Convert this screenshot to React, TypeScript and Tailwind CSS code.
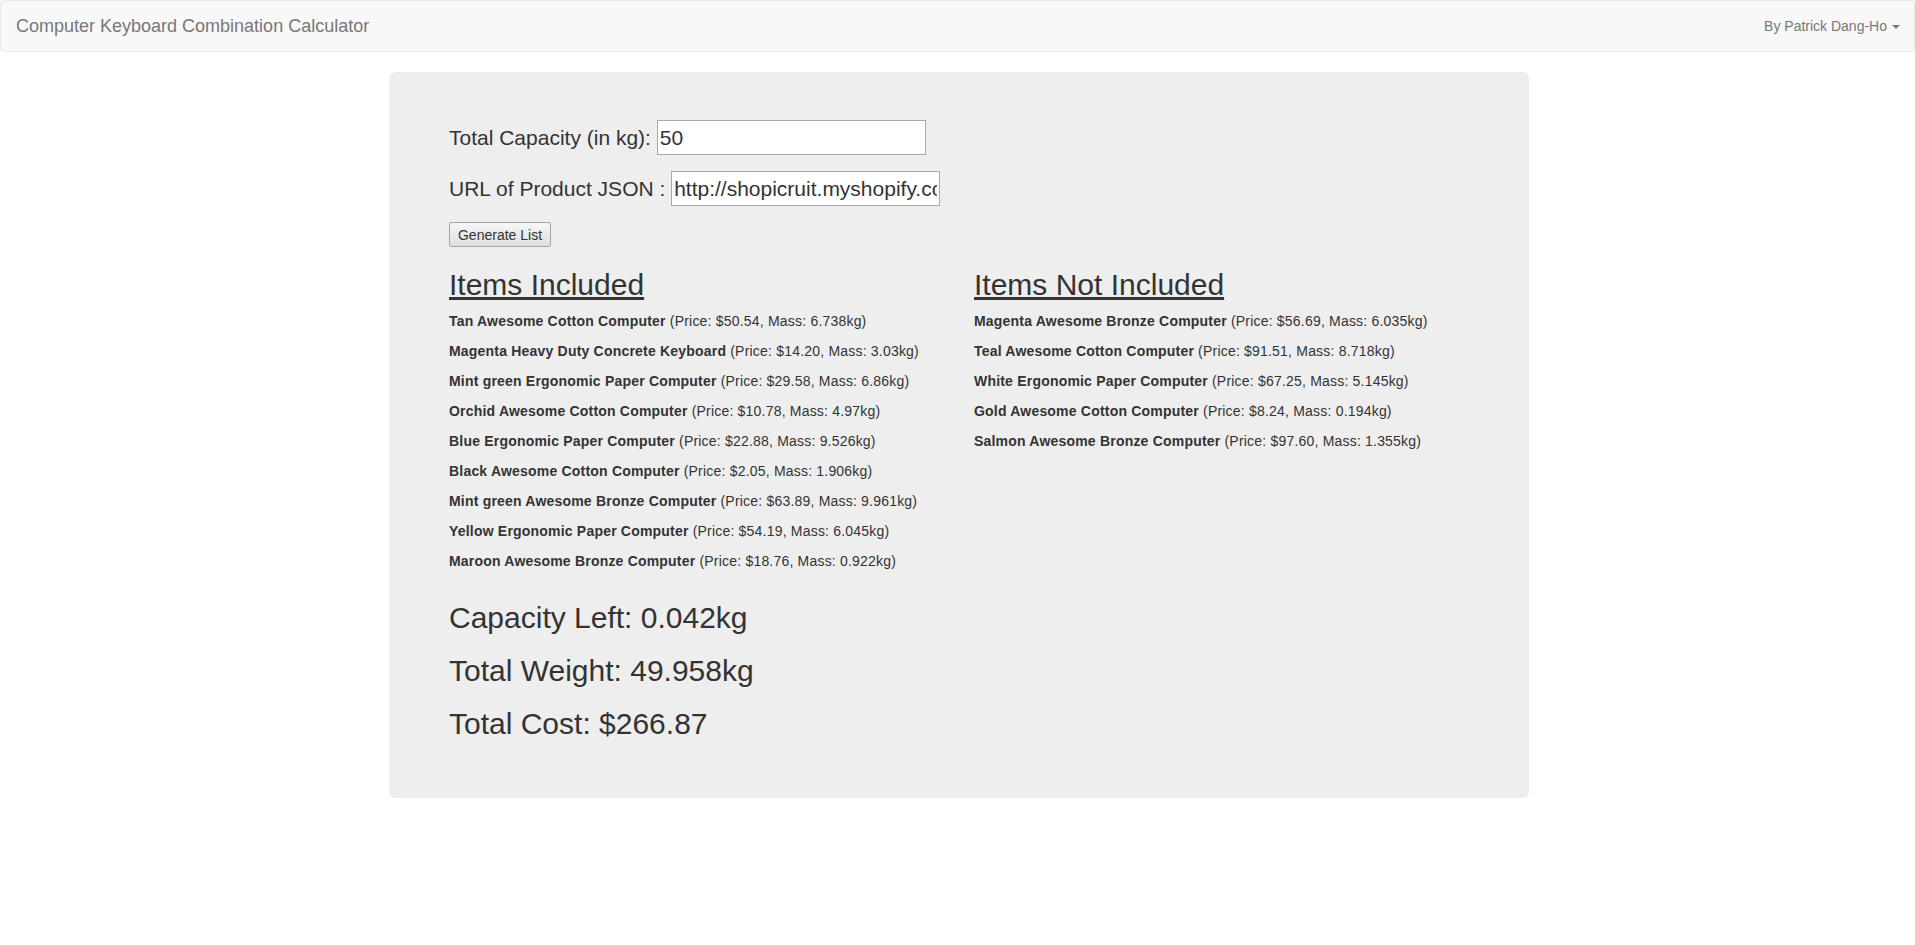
const included = [
  { name: "Tan Awesome Cotton Computer", price: "50.54", mass: "6.738" },
  { name: "Magenta Heavy Duty Concrete Keyboard", price: "14.20", mass: "3.03" },
  { name: "Mint green Ergonomic Paper Computer", price: "29.58", mass: "6.86" },
  { name: "Orchid Awesome Cotton Computer", price: "10.78", mass: "4.97" },
  { name: "Blue Ergonomic Paper Computer", price: "22.88", mass: "9.526" },
  { name: "Black Awesome Cotton Computer", price: "2.05", mass: "1.906" },
  { name: "Mint green Awesome Bronze Computer", price: "63.89", mass: "9.961" },
  { name: "Yellow Ergonomic Paper Computer", price: "54.19", mass: "6.045" },
  { name: "Maroon Awesome Bronze Computer", price: "18.76", mass: "0.922" },
];

const notIncluded = [
  { name: "Magenta Awesome Bronze Computer", price: "56.69", mass: "6.035" },
  { name: "Teal Awesome Cotton Computer", price: "91.51", mass: "8.718" },
  { name: "White Ergonomic Paper Computer", price: "67.25", mass: "5.145" },
  { name: "Gold Awesome Cotton Computer", price: "8.24", mass: "0.194" },
  { name: "Salmon Awesome Bronze Computer", price: "97.60", mass: "1.355" },
];

type Item = { name: string; price: string; mass: string };

function ItemList({ title, items }: { title: string; items: Item[] }) {
  return (
    <div>
      <h2 className="mb-[10px] text-[30px] leading-[33px] underline">{title}</h2>
      {items.map((item, idx) => (
        <p key={idx} className="mb-[10px] text-[14px] leading-[20px] tracking-[0.2px]">
          <b>{item.name}</b> (Price: ${item.price}, Mass: {item.mass}kg)
        </p>
      ))}
    </div>
  );
}

export default function App() {
  return (
    <div className="min-h-screen bg-white font-['Liberation_Sans',Arial,sans-serif] text-[14px] leading-[20px] text-[#333]">
      <nav className="mb-5 flex h-[52px] items-center justify-between rounded-[4px] border border-[#e7e7e7] bg-[#f8f8f8]">
        <span className="pl-[15px] text-[18px] leading-[20px] text-[#777]">
          Computer Keyboard Combination Calculator
        </span>
        <span className="flex items-center pr-[14px] text-[14px] text-[#777]">
          By Patrick Dang-Ho
          <span className="ml-[5px] mt-[1px] h-0 w-0 border-x-[4px] border-t-[4px] border-x-transparent border-t-[#777]" />
        </span>
      </nav>

      <div className="pl-[3px]">
        <div className="mx-auto w-[1140px] rounded-[6px] bg-[#eee] px-[60px] pt-[48px] pb-[58px]">
          <form className="flex flex-col items-start gap-4">
            <div className="flex h-[35px] items-center text-[21px]">
              <label htmlFor="capacity" className="whitespace-pre">
                Total Capacity (in kg):{" "}
              </label>
              <input
                id="capacity"
                type="text"
                defaultValue="50"
                className="h-[35px] w-[269px] border border-[#a9a9a9] bg-white px-[2px] text-[21px] text-[#333] outline-none"
              />
            </div>
            <div className="flex h-[35px] items-center text-[21px]">
              <label htmlFor="url" className="whitespace-pre">
                URL of Product JSON :{" "}
              </label>
              <input
                id="url"
                type="text"
                defaultValue="http://shopicruit.myshopify.com/products.json"
                className="h-[35px] w-[269px] border border-[#a9a9a9] bg-white px-[2px] text-[21px] text-[#333] outline-none"
              />
            </div>
            <button
              type="button"
              className="h-[25px] w-[102px] rounded-[2px] border border-[#a6a6a6] bg-gradient-to-b from-[#f7f7f7] to-[#dddddd] text-[14px] leading-[20px] text-[#333]"
            >
              Generate List
            </button>
          </form>

          <div className="mt-[21px] grid grid-cols-2 gap-[30px]">
            <ItemList title="Items Included" items={included} />
            <ItemList title="Items Not Included" items={notIncluded} />
          </div>

          <div className="mt-5 flex flex-col gap-5">
            <h2 className="text-[30px] leading-[33px]">Capacity Left: 0.042kg</h2>
            <h2 className="text-[30px] leading-[33px]">Total Weight: 49.958kg</h2>
            <h2 className="text-[30px] leading-[33px]">Total Cost: $266.87</h2>
          </div>
        </div>
      </div>
    </div>
  );
}
